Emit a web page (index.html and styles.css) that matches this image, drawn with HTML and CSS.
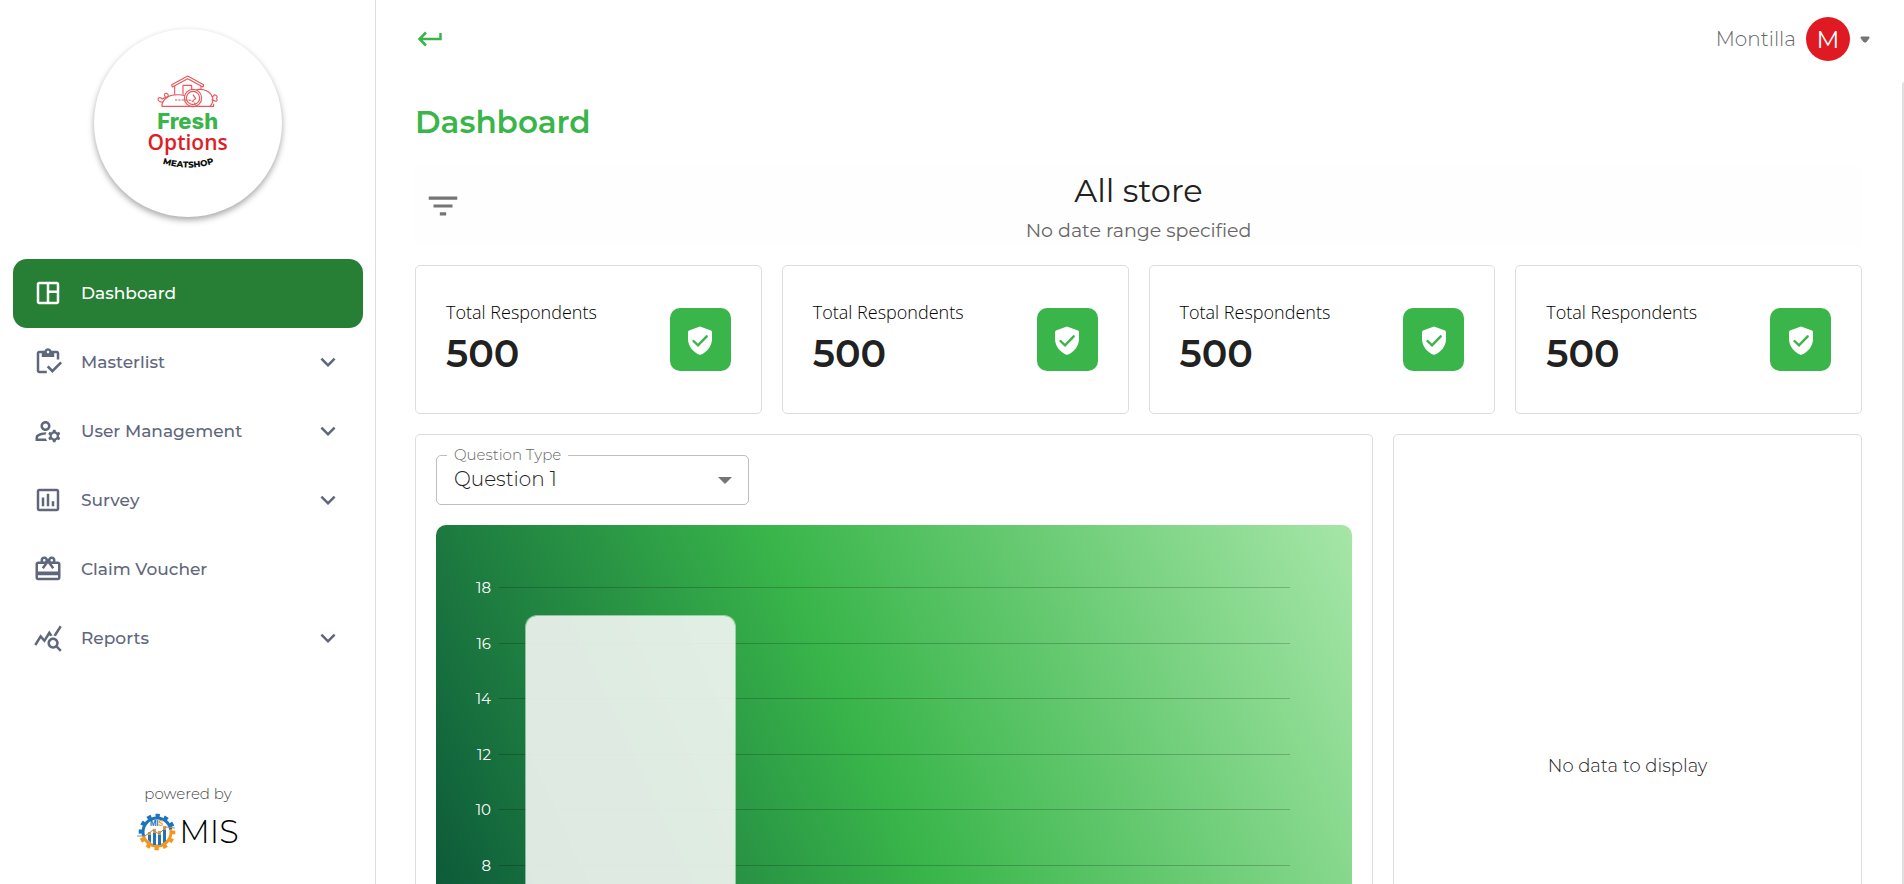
FILE: index.html
```html
<!DOCTYPE html>
<html lang="en">
<head>
<meta charset="utf-8">
<meta name="viewport" content="width=device-width, initial-scale=1">
<title>Dashboard</title>
<link rel="stylesheet" href="styles.css">
</head>
<body>
<div class="app">
  <aside class="sidebar">
    <div class="brand">
      <svg class="brand-logo" viewBox="190 157 270 300" role="img" aria-label="Fresh Options Meatshop">
        <g fill="none" stroke="#e8575b" stroke-width="3.4" stroke-linejoin="round">
          <path d="M276 192l48-26 48 26-2 7-46-25-46 25z"/>
          <path d="M285 196v27M364 196v12M310 222v-28h26v13"/>
          <circle cx="340" cy="232" r="26"/><circle cx="340" cy="232" r="20"/>
          <path d="M340 222l8 12-8 6"/>
          <path d="M350 207c24-4 44 6 49 24 3 12-2 20-8 26"/>
          <path d="M396 228c8 2 4-8 11-5 7 3 7 8 3 10 5 5 2 10-4 8-5-2-5-4-11-3"/>
          <path d="M246 257c2-16 10-24 22-30 10-6 38-6 48-2M246 257h156v-8"/>
          <path d="M286 238h40c12 0 20 8 24 19" stroke-dasharray="7 3"/>
          <path d="M250 244c-12 2-18-8-13-12 5-3 8 0 10 3 5-4 14-4 20-8M262 232c-8-2-10-12-4-14 6-1 8 4 8 8"/>
        </g>
        <text class="logo-fresh" x="324" y="326" text-anchor="middle">Fresh</text>
        <text class="logo-options" x="324" y="389" text-anchor="middle">Options</text>
        <path id="arc" d="M240 426Q325 456 412 426" fill="none"/>
        <text class="logo-shop" text-anchor="middle"><textPath href="#arc" startOffset="50%">MEATSHOP</textPath></text>
      </svg>
    </div>
    <nav class="nav" aria-label="Main">
      <a class="nav-item active" href="#" aria-current="page">
        <svg class="icon" viewBox="0 0 24 24"><path d="M19 3H5c-1.100 0-2 .9-2 2v14c0 1.100.9 2 2 2h14c1.100 0 2-.9 2-2V5c0-1.100-.9-2-2-2zM5 19V5h6v14H5zm14 0h-6v-7h6v7zm0-9h-6V5h6v5z"/></svg>
        <span>Dashboard</span>
      </a>
      <button class="nav-item" type="button" aria-expanded="false">
        <svg class="icon" viewBox="0 0 24 24"><path d="M5 5h2v3h10V5h2v5h2V5c0-1.100-.9-2-2-2h-4.180C14.400 1.840 13.300 1 12 1s-2.400.84-2.820 2H5c-1.100 0-2 .9-2 2v14c0 1.100.9 2 2 2h6v-2H5V5zm7-2c.55 0 1 .45 1 1s-.45 1-1 1-1-.45-1-1 .45-1 1-1z"/><path d="M21.750 11.500l-6.240 6.250-3.010-3L11 16.250l4.510 4.500L23.250 13z"/></svg>
        <span>Masterlist</span>
        <svg class="icon chevron" viewBox="0 0 24 24"><path d="M7.410 8.590 12 13.170l4.590-4.580L18 10l-6 6-6-6z"/></svg>
      </button>
      <button class="nav-item" type="button" aria-expanded="false">
        <svg class="icon" viewBox="0 0 24 24"><path d="M4 18v-.65c0-.34.16-.66.41-.81C6.100 15.530 8.030 15 10 15c.03 0 .05 0 .08.01.1-.7.3-1.370.59-1.980-.22-.02-.44-.03-.67-.03-2.420 0-4.680.67-6.610 1.820-.88.52-1.390 1.500-1.390 2.530V20h9.260c-.42-.6-.75-1.280-.97-2H4zM10 12c2.210 0 4-1.790 4-4s-1.790-4-4-4-4 1.790-4 4 1.790 4 4 4zm0-6c1.100 0 2 .9 2 2s-.9 2-2 2-2-.9-2-2 .9-2 2-2zM20.750 16c0-.22-.03-.42-.06-.63l1.140-1.010-1-1.730-1.450.49c-.32-.27-.68-.48-1.080-.63L18 11h-2l-.3 1.490c-.4.15-.76.36-1.080.63l-1.450-.49-1 1.730 1.140 1.010c-.03.21-.06.41-.06.63s.03.42.06.63l-1.140 1.010 1 1.730 1.450-.49c.32.27.68.48 1.080.63L16 21h2l.3-1.490c.4-.15.76-.36 1.080-.63l1.450.49 1-1.730-1.140-1.010c.03-.21.06-.41.06-.63zM17 18c-1.100 0-2-.9-2-2s.9-2 2-2 2 .9 2 2-.9 2-2 2z"/></svg>
        <span>User Management</span>
        <svg class="icon chevron" viewBox="0 0 24 24"><path d="M7.410 8.590 12 13.170l4.590-4.580L18 10l-6 6-6-6z"/></svg>
      </button>
      <button class="nav-item" type="button" aria-expanded="false">
        <svg class="icon" viewBox="0 0 24 24"><path d="M19 3H5c-1.100 0-2 .9-2 2v14c0 1.100.9 2 2 2h14c1.100 0 2-.9 2-2V5c0-1.100-.9-2-2-2zm0 16H5V5h14v14zM7 10h2v7H7zm4-3h2v10h-2zm4 6h2v4h-2z"/></svg>
        <span>Survey</span>
        <svg class="icon chevron" viewBox="0 0 24 24"><path d="M7.410 8.590 12 13.170l4.590-4.580L18 10l-6 6-6-6z"/></svg>
      </button>
      <a class="nav-item" href="#">
        <svg class="icon" viewBox="0 0 24 24"><path d="M20 6h-2.180c.11-.31.18-.65.18-1 0-1.660-1.340-3-3-3-1.050 0-1.960.54-2.500 1.350l-.5.67-.5-.68C10.960 2.540 10.050 2 9 2 7.340 2 6 3.340 6 5c0 .35.07.69.18 1H4c-1.110 0-1.990.89-1.990 2L2 19c0 1.110.89 2 2 2h16c1.110 0 2-.89 2-2V8c0-1.110-.89-2-2-2zm-5-2c.55 0 1 .45 1 1s-.45 1-1 1-1-.45-1-1 .45-1 1-1zM9 4c.55 0 1 .45 1 1s-.45 1-1 1-1-.45-1-1 .45-1 1-1zm11 15H4v-2h16v2zm0-5H4V8h5.080L7 10.830 8.620 12 12 7.400l3.380 4.600L17 10.830 14.920 8H20v6z"/></svg>
        <span>Claim Voucher</span>
      </a>
      <button class="nav-item" type="button" aria-expanded="false">
        <svg class="icon" viewBox="0 0 24 24"><path d="M19.880 18.470c.44-.7.7-1.510.7-2.390 0-2.490-2.010-4.500-4.500-4.500s-4.500 2.010-4.500 4.500 2.010 4.500 4.490 4.500c.88 0 1.700-.26 2.390-.7L21.580 23 23 21.580l-3.120-3.110zm-3.800.11c-1.380 0-2.500-1.120-2.500-2.500s1.120-2.500 2.500-2.500 2.500 1.120 2.500 2.500-1.120 2.500-2.500 2.500zm-.36-8.500c-.74.02-1.450.18-2.100.45l-.55-.83-3.800 6.180-3.010-3.520-3.630 5.810L1 17l5-8 3 3.500L13 6l2.720 4.080zm2.590.5c-.64-.28-1.330-.45-2.050-.49L21.380 2 23 3.180l-4.690 7.400z"/></svg>
        <span>Reports</span>
        <svg class="icon chevron" viewBox="0 0 24 24"><path d="M7.410 8.590 12 13.170l4.590-4.580L18 10l-6 6-6-6z"/></svg>
      </button>
    </nav>
    <footer class="powered">
      <span class="powered-label">powered by</span>
      <div class="powered-brand">
        <svg class="gear" viewBox="0 0 40 40" aria-hidden="true">
          <defs>
            <linearGradient id="ring" gradientUnits="userSpaceOnUse" x1="16" y1="4" x2="24" y2="36">
              <stop offset=".52" stop-color="#1c75bc"/><stop offset=".52" stop-color="#f7941d"/>
            </linearGradient>
          </defs>
          <g fill="none" stroke="url(#ring)">
            <circle cx="20" cy="20" r="14" stroke-width="3"/>
            <circle cx="20" cy="20" r="16.500" stroke-width="3.600" stroke-dasharray="4.320 4.320" stroke-dashoffset="2"/>
          </g>
          <path d="M11 23h3v8l-3-3zM16 21h3v12h-3zM21 23h3v10h-3zM26 18h3v11l-3 2z" fill="#1c75bc"/>
          <path d="M11 20h3v3h-3zM16 17h3v4h-3zM21 19h3v4h-3zM26 14h3v4h-3z" fill="#f7941d"/>
          <path d="M0 24h8l8-6 6 4 7-7 9 1" stroke="#8b8e94" fill="none"/>
          <text class="gear-text" x="13" y="14">MI<tspan fill="#f7941d">S</tspan></text>
        </svg>
        <span class="mis">MIS</span>
      </div>
    </footer>
  </aside>

  <div class="page">
    <header class="topbar">
      <button class="back" type="button" aria-label="Back">
        <svg viewBox="0 0 30 30"><path d="M25.500 9v6H5M11 8.500L4.500 15l6.500 6.500" fill="none" stroke="#39b54a" stroke-width="2.500"/></svg>
      </button>
      <button class="account" type="button" aria-haspopup="true">
        <span>Montilla</span>
        <span class="avatar">M</span>
        <svg class="caret" viewBox="0 0 10 7"><path d="M1 1h8v1L6 6H4L1 2z" fill="#757575" stroke="#757575" stroke-linejoin="round"/></svg>
      </button>
    </header>
    <div class="scroller">
      <main class="content">
        <h1 class="title">Dashboard</h1>
        <section class="filter-bar">
          <button class="filter" type="button" aria-label="Filter">
            <svg viewBox="0 0 24 24"><path d="M10 18h4v-2h-4v2zM3 6v2h18V6H3zm3 7h12v-2H6v2z"/></svg>
          </button>
          <div class="filter-text">
            <h2 class="store">All store</h2>
            <p class="range">No date range specified</p>
          </div>
        </section>
        <section class="grid">
          <article class="card stat">
            <div><p class="stat-label">Total Respondents</p><p class="stat-value">500</p></div>
            <span class="badge"><svg viewBox="0 0 30 30"><path d="M15 1.500 26 5.500Q27 6 27 7v7c0 7-5 13-11 15.500q-1 .4-2 0C8 27 3 21 3 14V7q0-1 1-1.500z" fill="#fff"/><path d="M8.500 16l4.500 4.300 8.700-9" fill="none" stroke="#39b54a" stroke-width="2.400" stroke-linecap="round"/></svg></span>
          </article>
          <article class="card stat">
            <div><p class="stat-label">Total Respondents</p><p class="stat-value">500</p></div>
            <span class="badge"><svg viewBox="0 0 30 30"><path d="M15 1.500 26 5.500Q27 6 27 7v7c0 7-5 13-11 15.500q-1 .4-2 0C8 27 3 21 3 14V7q0-1 1-1.500z" fill="#fff"/><path d="M8.500 16l4.500 4.300 8.700-9" fill="none" stroke="#39b54a" stroke-width="2.400" stroke-linecap="round"/></svg></span>
          </article>
          <article class="card stat">
            <div><p class="stat-label">Total Respondents</p><p class="stat-value">500</p></div>
            <span class="badge"><svg viewBox="0 0 30 30"><path d="M15 1.500 26 5.500Q27 6 27 7v7c0 7-5 13-11 15.500q-1 .4-2 0C8 27 3 21 3 14V7q0-1 1-1.500z" fill="#fff"/><path d="M8.500 16l4.500 4.300 8.700-9" fill="none" stroke="#39b54a" stroke-width="2.400" stroke-linecap="round"/></svg></span>
          </article>
          <article class="card stat">
            <div><p class="stat-label">Total Respondents</p><p class="stat-value">500</p></div>
            <span class="badge"><svg viewBox="0 0 30 30"><path d="M15 1.500 26 5.500Q27 6 27 7v7c0 7-5 13-11 15.500q-1 .4-2 0C8 27 3 21 3 14V7q0-1 1-1.500z" fill="#fff"/><path d="M8.500 16l4.500 4.300 8.700-9" fill="none" stroke="#39b54a" stroke-width="2.400" stroke-linecap="round"/></svg></span>
          </article>
          <article class="card chart-card">
            <div class="field">
              <label class="field-label" for="question">Question Type</label>
              <select class="field-select" id="question"><option>Question 1</option></select>
              <svg class="field-caret" viewBox="0 0 14 7"><path d="M0 0h14L7 7z" fill="#757575"/></svg>
            </div>
            <div class="chart">
              <div class="axis">
                <span>18</span><span>16</span><span>14</span><span>12</span><span>10</span><span>8</span><span>6</span><span>4</span><span>2</span>
              </div>
              <div class="plot">
                <div class="lines"><i></i><i></i><i></i><i></i><i></i><i></i><i></i><i></i><i></i></div>
                <div class="bar" style="height:89%"></div>
              </div>
            </div>
          </article>
          <article class="card empty"><p>No data to display</p></article>
        </section>
      </main>
      <div class="rail"></div>
    </div>
  </div>
</div>
</body>
</html>
```

FILE: styles.css
```css
* { box-sizing: border-box; }
body, h1, h2, p { margin: 0; }
body {
  font-family: Montserrat, Inter, "Open Sans", sans-serif;
  color: #212121;
  background: #fff;
  overflow: hidden;
}
button {
  font: inherit;
  color: inherit;
  background: none;
  border: 0;
  padding: 0;
  cursor: pointer;
}
svg { display: block; flex: none; }
.app { display: flex; height: 100vh; }

.sidebar {
  flex: none;
  width: 376px;
  padding: 29px 12px 32px 13px;
  border-right: 1px solid #ddd;
  display: flex;
  flex-direction: column;
}
.brand {
  width: 188px;
  height: 188px;
  margin: 0 auto 42px;
  border-radius: 50%;
  box-shadow: 0 3px 6px rgba(0, 0, 0, .35);
  display: grid;
  place-items: center;
}
.brand-logo { width: 90px; height: 100px; }
.logo-fresh { font: 800 66px Inter, sans-serif; fill: #39b54a; }
.logo-options { font: 600 63px "Open Sans", sans-serif; fill: #e01e26; }
.logo-shop { font: 800 26px Montserrat, Inter, sans-serif; fill: #111; }

.nav { display: flex; flex-direction: column; }
.nav-item {
  display: flex;
  align-items: center;
  gap: 18px;
  width: 100%;
  height: 69px;
  padding: 0 20px 1px;
  border-radius: 14px;
  font-size: 17px;
  font-weight: 500;
  color: #5f677d;
  text-align: left;
  text-decoration: none;
}
.nav-item.active { background: #277f35; color: #fff; }
.icon { width: 30px; height: 30px; fill: currentColor; }
.chevron { margin-left: auto; }

.powered {
  margin-top: auto;
  display: flex;
  flex-direction: column;
  align-items: center;
  gap: 8px;
}
.powered-label { font-size: 15px; line-height: 20px; font-weight: 300; color: #444; }
.powered-brand { display: flex; align-items: center; gap: 2px; }
.gear { width: 40px; height: 40px; }
.gear-text { font: 700 7px Inter, sans-serif; fill: #1c75bc; }
.mis { font-size: 32px; line-height: 40px; font-weight: 300; color: #000; }

.page { flex: 1; min-width: 0; display: flex; flex-direction: column; }
.topbar {
  display: flex;
  justify-content: space-between;
  align-items: center;
  height: 78px;
  padding: 0 34px 0 39px;
}
.back svg { width: 30px; height: 30px; }
.account { display: flex; align-items: center; gap: 10px; font-size: 20px; font-weight: 300; color: #666; }
.avatar {
  width: 44px;
  height: 44px;
  border-radius: 50%;
  background: #e01a22;
  color: #fff;
  font-size: 24px;
  font-weight: 400;
  display: grid;
  place-items: center;
}
.caret { width: 10px; height: 7px; }

.scroller { flex: 1; min-height: 0; display: flex; }
.content { flex: 1; min-width: 0; overflow-y: auto; scrollbar-width: none; padding: 24px 40px 40px 39px; }
.rail { width: 2px; margin-top: 4px; background: #e0e0e0; border-radius: 2px 0 0 0; }
.title { font-size: 31px; line-height: 40px; font-weight: 600; color: #39b54a; }

.filter-bar {
  display: grid;
  grid-template-columns: 56px 1fr 56px;
  align-items: center;
  height: 80px;
  margin: 24px 0 19px;
  background: #fefefe;
}
.filter { justify-self: center; }
.filter svg { width: 38px; height: 38px; fill: #757575; }
.filter-text { text-align: center; }
.store { font-size: 32px; line-height: 50px; font-weight: 400; }
.range { font-size: 19px; line-height: 30px; color: #666; }

.grid { display: grid; grid-template-columns: repeat(12, minmax(0, 1fr)); gap: 20px; }
.card { border: 1px solid #ddd; border-radius: 5px; background: #fff; }
.stat {
  grid-column: span 3;
  display: flex;
  justify-content: space-between;
  align-items: center;
  height: 149px;
  padding: 0 30px;
}
.stat-label { font: 300 18px/28px "Open Sans", sans-serif; color: #000; }
.stat-value { font-size: 38px; line-height: 56px; font-weight: 600; }
.badge {
  width: 61px;
  height: 63px;
  border-radius: 10px;
  background: #39b54a;
  display: grid;
  place-items: center;
}
.badge svg { width: 30px; height: 30px; }

.chart-card { grid-column: span 8; padding: 20px; }
.field { position: relative; width: 313px; max-width: 100%; height: 50px; margin-bottom: 20px; }
.field-label {
  position: absolute;
  left: 11px;
  top: -9px;
  padding: 0 7px;
  background: #fff;
  font-size: 15px;
  line-height: 18px;
  font-weight: 300;
  color: #666;
}
.field-select {
  appearance: none;
  width: 100%;
  height: 50px;
  padding: 0 40px 2px 17px;
  border: 1px solid #bdbdbd;
  border-radius: 5px;
  background: #fff;
  font: inherit;
  font-size: 20px;
  font-weight: 300;
  color: #212121;
}
.field-caret { position: absolute; right: 17px; top: 22px; width: 14px; height: 7px; pointer-events: none; }

.chart {
  display: flex;
  gap: 8px;
  height: 552px;
  padding: 35px 62px 0 0;
  border-radius: 10px;
  background: linear-gradient(65deg, #054a37, #39b54a 50%, #a6e6a8);
}
.axis, .lines { display: grid; grid-auto-rows: 1fr; height: 500px; }
.axis { width: 55px; align-items: center; text-align: right; font-size: 15px; color: #fff; }
.plot { flex: 1; position: relative; height: 500px; }
.lines i { align-self: center; height: 1px; background: rgba(0, 0, 0, .2); }
.bar {
  position: absolute;
  left: 3.3%;
  bottom: 0;
  width: 27%;
  max-width: 211px;
  border: 1px solid rgba(255, 255, 255, .5);
  border-radius: 12px 12px 0 0;
  background: rgba(244, 246, 244, .9);
  background-clip: padding-box;
}
.empty {
  grid-column: span 4;
  display: grid;
  place-items: center;
  font-size: 18px;
  font-weight: 300;
}
```
